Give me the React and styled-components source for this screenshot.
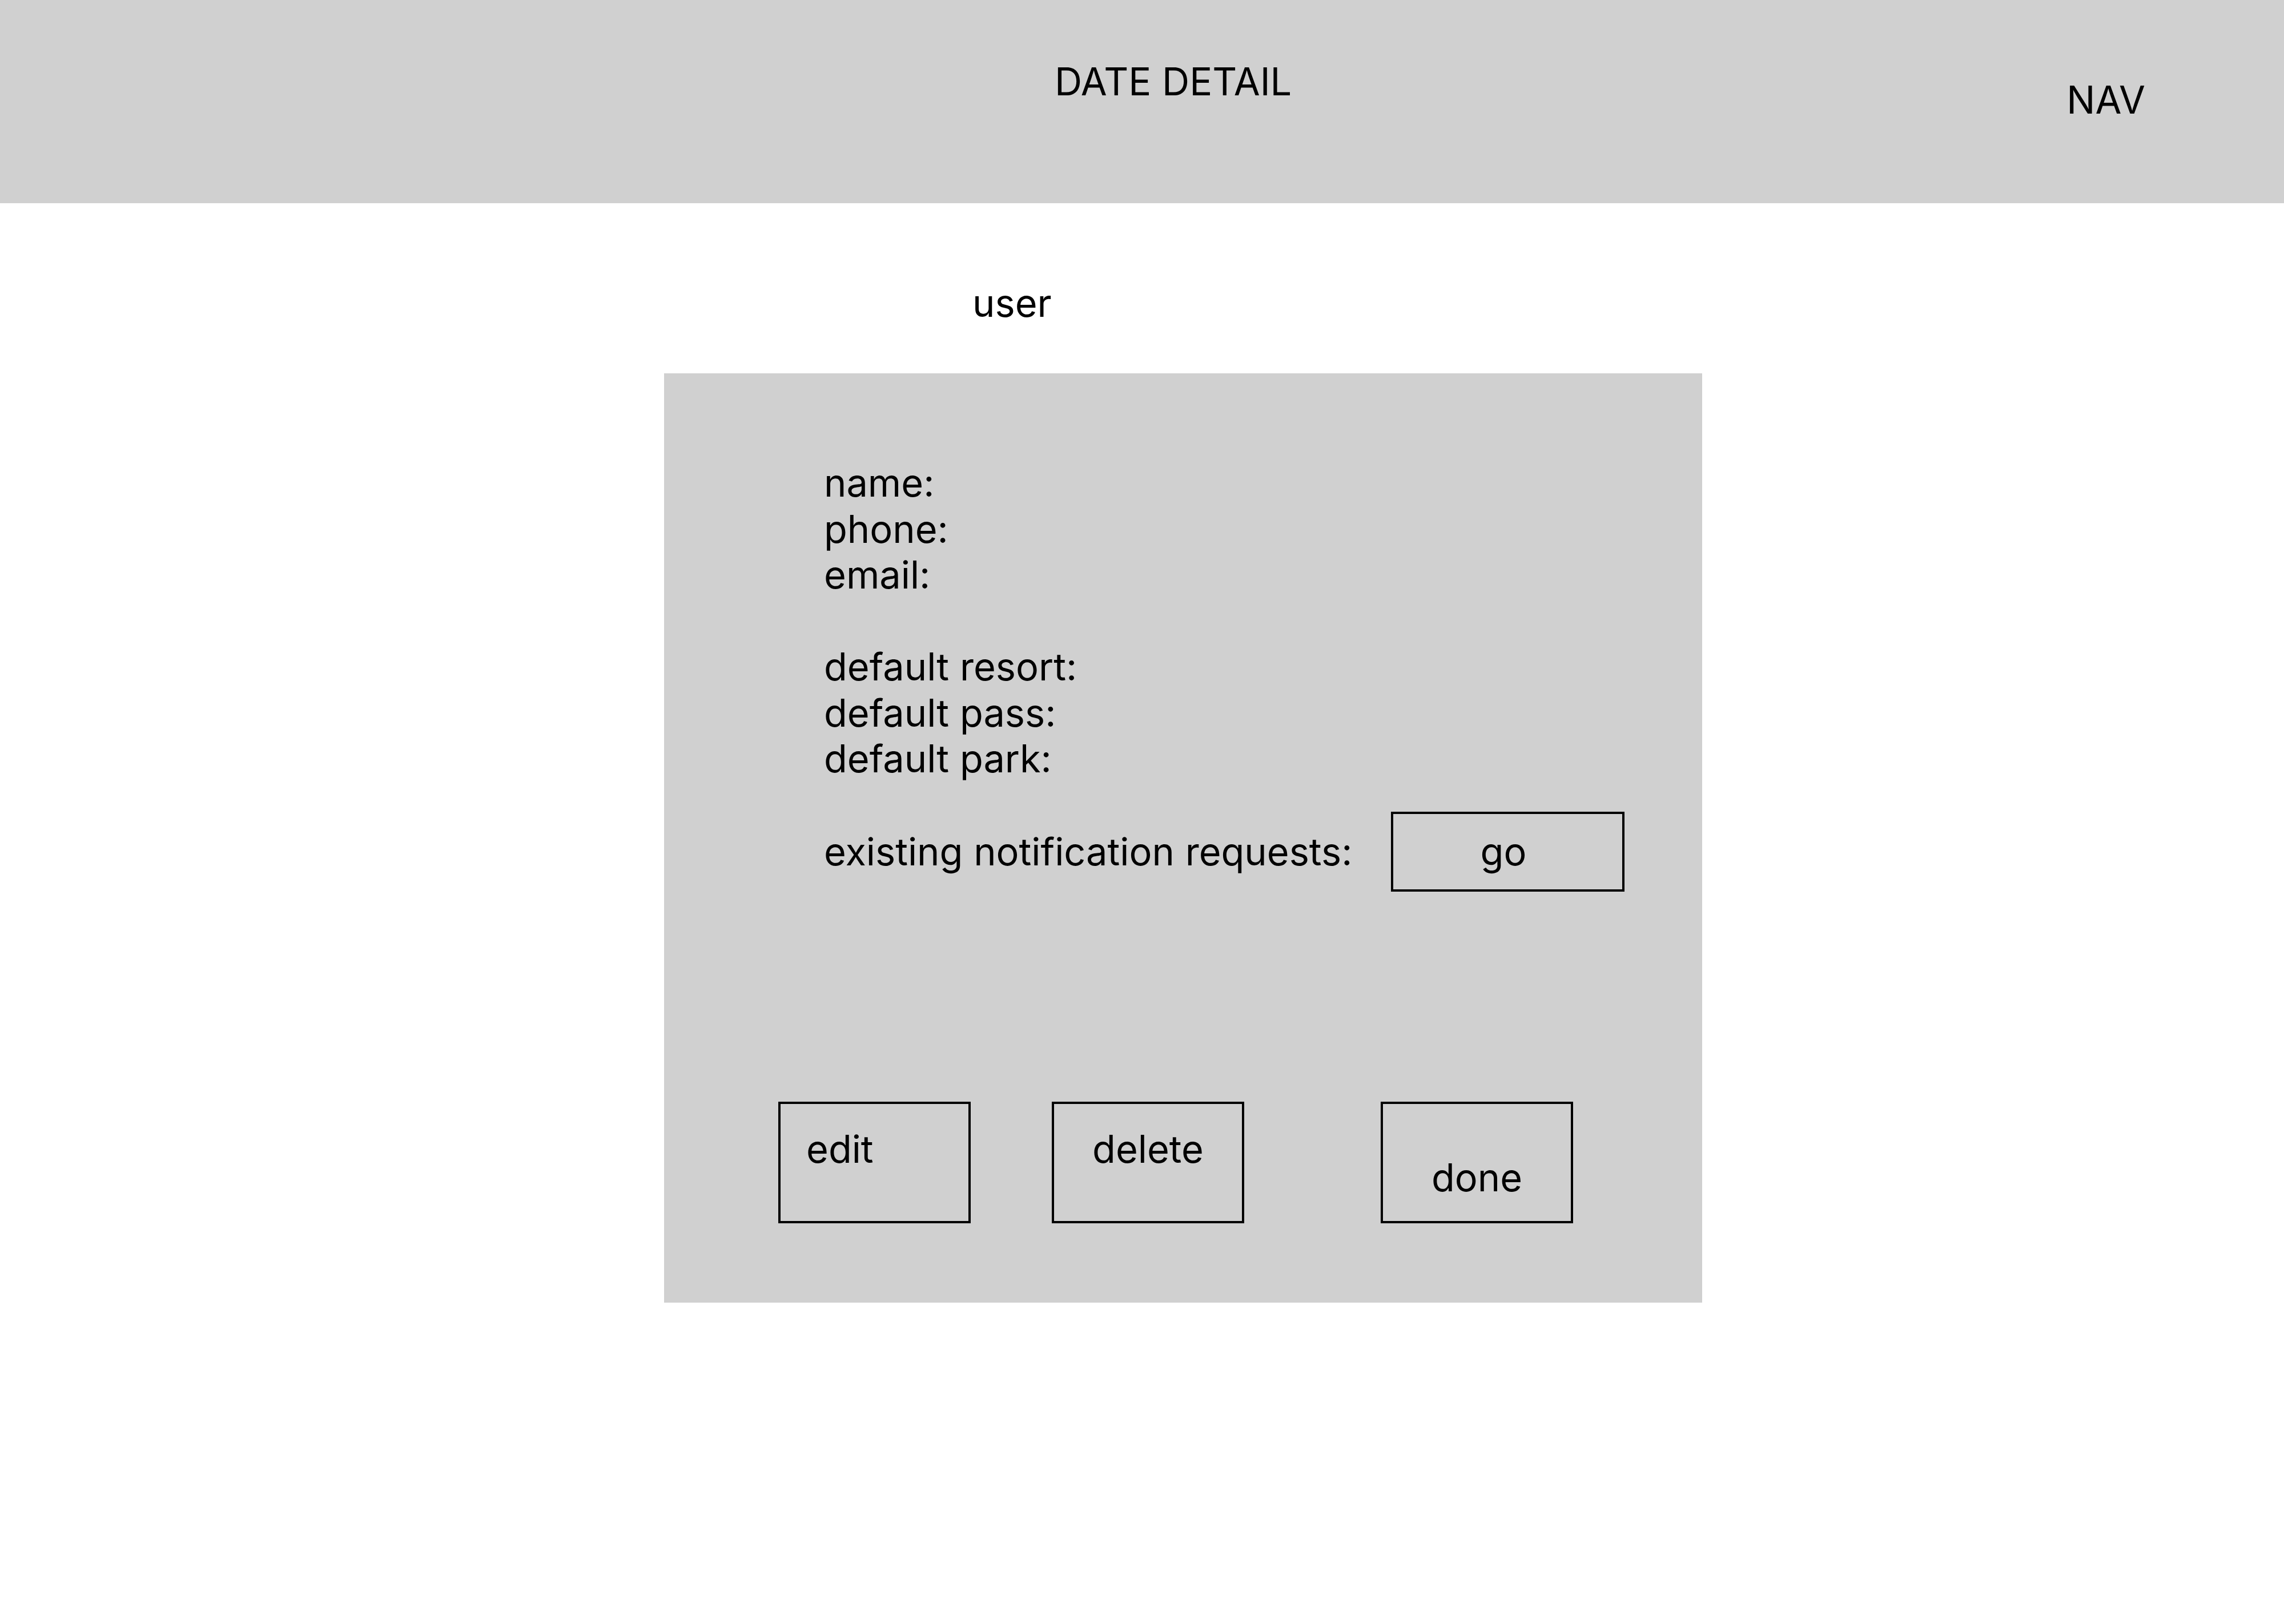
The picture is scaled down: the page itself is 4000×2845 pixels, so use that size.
import React from 'react';
import styled, { createGlobalStyle } from 'styled-components';

const GlobalStyle = createGlobalStyle`
    html, body {
        margin: 0;
        padding: 0;
        background: #FFF;
    }
    body {
        font-family: Inter, "Liberation Sans", sans-serif;
        font-size: 66.7px;
        line-height: 80.5px;
        color: #000;
    }
`;

const Page = styled.div`
    width: 4000px;
    min-height: 2845px;
    background: #FFF;
`;

const Header = styled.header`
    height: 356px;
    background: #D0D0D0;
    display: flex;
    align-items: flex-start;
    padding: 0 243px 0 1847px;
    box-sizing: border-box;
`;

const Title = styled.h1`
    margin: 103px 0 0 0;
    font-size: 66.7px;
    font-weight: 400;
    line-height: 80px;
`;

const Nav = styled.div`
    margin: 135px 0 0 auto;
    line-height: 80px;
`;

const Main = styled.main`
    display: flex;
    flex-direction: column;
    padding-left: 1163px;
`;

const UserLabel = styled.div`
    margin: 135px 0 0 540px;
    line-height: 80px;
`;

const Panel = styled.section`
    margin-top: 83px;
    width: 1818px;
    background: #D0D0D0;
    padding: 152px 0 139px;
    display: flex;
    flex-direction: column;
`;

const Fields = styled.div`
    padding-left: 280px;
    display: flex;
    flex-direction: column;
`;

const Field = styled.div`
    height: 80.5px;
    line-height: 80.5px;
`;

const NotifyRow = styled.div`
    margin-top: 52.5px;
    padding-left: 280px;
    display: flex;
    align-items: center;
    gap: 68px;
`;

const Box = styled.button`
    box-sizing: border-box;
    width: ${p => p.$width || '337px'};
    height: ${p => p.$height || '213px'};
    border: 4px solid #000;
    background: transparent;
    font-family: inherit;
    font-size: 66.7px;
    line-height: 80px;
    color: #000;
    display: flex;
    flex-direction: column;
    justify-content: ${p => (p.$middle ? 'center' : 'flex-start')};
    align-items: ${p => (p.$left ? 'flex-start' : 'center')};
    padding: ${p => p.$pad || '0'};
    cursor: pointer;
`;

const ActionRow = styled.div`
    margin-top: 368px;
    padding-left: 200px;
    display: flex;
    align-items: flex-start;
`;

const Spacer = styled.div`
    width: ${p => p.$w};
    flex: none;
`;

export default function UserDetail() {
    return (
        <Page>
            <GlobalStyle />
            <Header>
                <Title>DATE DETAIL</Title>
                <Nav>NAV</Nav>
            </Header>
            <Main>
                <UserLabel>user</UserLabel>
                <Panel>
                    <Fields>
                        <Field>name:</Field>
                        <Field>phone:</Field>
                        <Field>email:</Field>
                        <Field />
                        <Field>default resort:</Field>
                        <Field>default pass:</Field>
                        <Field>default park:</Field>
                    </Fields>
                    <NotifyRow>
                        <span>existing notification requests:</span>
                        <Box $width="409px" $height="140px" $middle $pad="0 16px 0 0">go</Box>
                    </NotifyRow>
                    <ActionRow>
                        <Box $left $pad="39px 0 0 45px">edit</Box>
                        <Spacer $w="142px" />
                        <Box $pad="39px 0 0 0">delete</Box>
                        <Spacer $w="239px" />
                        <Box $pad="89px 0 0 0">done</Box>
                    </ActionRow>
                </Panel>
            </Main>
        </Page>
    );
}
